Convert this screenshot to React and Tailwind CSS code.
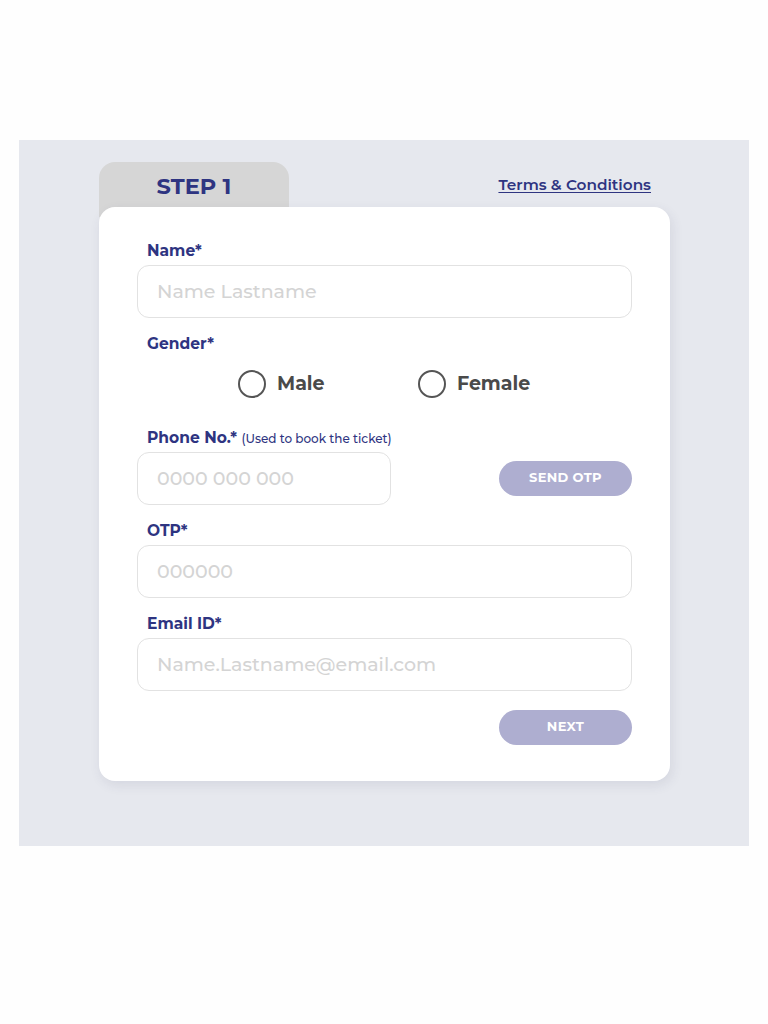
import React, { useState } from "react";

const font = { fontFamily: "Montserrat, Inter, 'Noto Sans', sans-serif" };

/* -------- Field label -------- */
const Label = ({ children, className = "" }) => (
  <div className={`pl-[10px] text-[15.5px] leading-[20px] font-bold text-[#2e3481] ${className}`}>
    {children}
  </div>
);

/* -------- Text input -------- */
const Field = ({ placeholder, className = "" }) => (
  <input
    type="text"
    placeholder={placeholder}
    className={`h-[53px] rounded-[12px] border border-[#e2e2e2] bg-white px-[19px] text-[19px] font-medium text-[#444] placeholder:text-[#d4d4d4] outline-none ${className}`}
    style={font}
  />
);

/* -------- Radio -------- */
const Radio = ({ label, checked, onClick, className = "" }) => (
  <button onClick={onClick} className={`flex items-center gap-[11px] ${className}`}>
    <span className="flex h-[28px] w-[28px] items-center justify-center rounded-full border-2 border-[#555]">
      {checked && <span className="h-[14px] w-[14px] rounded-full bg-[#2e3481]"></span>}
    </span>
    <span className="text-[19px] font-bold text-[#4a4a4a]">{label}</span>
  </button>
);

export default function App() {
  const [gender, setGender] = useState("");

  return (
    <div className="min-h-[1024px] bg-[#fefefe] pt-[140px]" style={font}>
      <div className="mx-[19px] h-[706px] bg-[#e6e8ee] pl-[80px] pt-[22px]">
        {/* HEADER */}
        <div className="flex w-[571px] items-start justify-between">
          <div className="flex h-[55px] w-[190px] justify-center rounded-t-[16px] bg-[#d6d6d6] pt-[9px]">
            <span className="text-[22.5px] leading-[30px] font-bold text-[#2e3481]">STEP 1</span>
          </div>
          <a
            href="#"
            className="mr-[19px] pt-[13px] text-[15.3px] leading-[20px] font-semibold text-[#2e3481] underline underline-offset-2"
          >
            Terms &amp; Conditions
          </a>
        </div>

        {/* CARD */}
        <div className="relative -mt-[10px] w-[571px] rounded-[16px] bg-white px-[38px] pt-[34px] pb-[36px] shadow-[2px_4px_12px_rgba(60,60,100,0.10)]">
          <Label className="mb-[4px]">Name*</Label>
          <Field placeholder="Name Lastname" className="w-full" />

          <Label className="mt-[16px]">Gender*</Label>
          <div className="mt-[16px] flex pl-[101px]">
            <Radio label="Male" checked={gender === "m"} onClick={() => setGender("m")} className="w-[180px]" />
            <Radio label="Female" checked={gender === "f"} onClick={() => setGender("f")} />
          </div>

          <Label className="mt-[29px] mb-[3px]">
            Phone No.* <span className="text-[12px] font-medium">(Used to book the ticket)</span>
          </Label>
          <div className="flex items-center justify-between">
            <Field placeholder="0000 000 000" className="w-[254px]" />
            <button className="h-[35px] w-[133px] rounded-full bg-[#aeaed0] text-[13px] font-bold tracking-wide text-white">
              SEND OTP
            </button>
          </div>

          <Label className="mt-[16px] mb-[4px]">OTP*</Label>
          <Field placeholder="000000" className="w-full" />

          <Label className="mt-[16px] mb-[4px]">Email ID*</Label>
          <Field placeholder="Name.Lastname@email.com" className="w-full" />

          <div className="mt-[19px] flex justify-end">
            <button className="h-[35px] w-[133px] rounded-full bg-[#aeaed0] text-[13px] font-bold tracking-wide text-white">
              NEXT
            </button>
          </div>
        </div>
      </div>
    </div>
  );
}
